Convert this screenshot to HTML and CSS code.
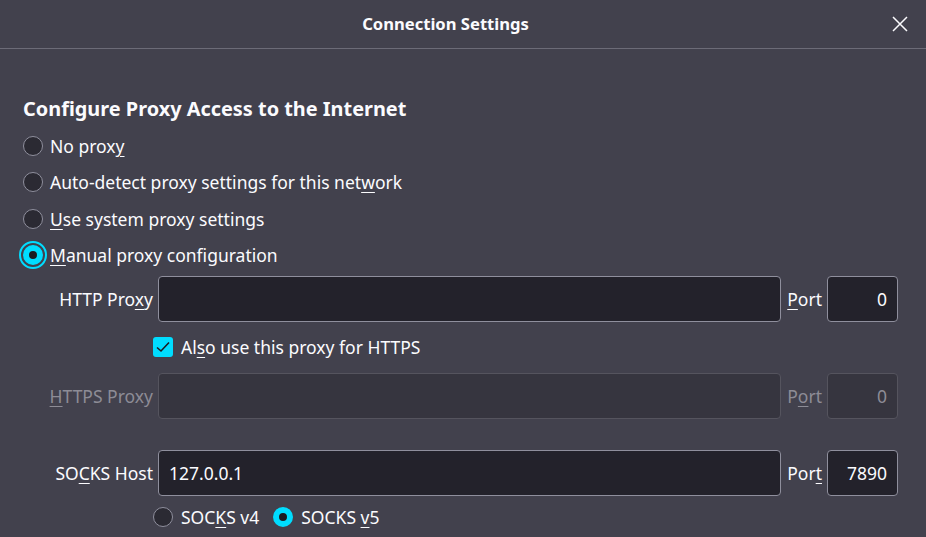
FILE: index.html
```html
<!DOCTYPE html>
<html>
<head>
<meta charset="utf-8">
<link rel="stylesheet" href="styles.css">
</head>
<body>
<div class="dialog">
  <header class="titlebar">
    <span class="title">Connection Settings</span>
    <svg class="close" width="16" height="16" viewBox="0 0 16 16"><path d="M1 1 L15 15 M15 1 L1 15" stroke="#fbfbfe" stroke-width="1.5" fill="none"/></svg>
  </header>
  <main class="content">
    <h1 class="heading">Configure Proxy Access to the Internet</h1>
    <div class="radio-list">
      <label class="radio-row"><span class="radio"></span><span>No prox<u>y</u></span></label>
      <label class="radio-row"><span class="radio"></span><span>Auto-detect proxy settings for this net<u>w</u>ork</span></label>
      <label class="radio-row"><span class="radio"></span><span><u>U</u>se system proxy settings</span></label>
      <label class="radio-row"><span class="radio checked focused"></span><span><u>M</u>anual proxy configuration</span></label>
    </div>
    <div class="manual">
      <div class="field-row">
        <span class="field-label">HTTP Pro<u>x</u>y</span>
        <div class="input"></div>
        <span class="port-label"><u>P</u>ort</span>
        <div class="input port">0</div>
      </div>
      <div class="check-row">
        <span class="checkbox"><svg width="20" height="20" viewBox="0 0 20 20"><path d="M4 10.5 L8 14 L16 5.5" stroke="#1c1b22" stroke-width="1.6" fill="none"/></svg></span>
        <span>Al<u>s</u>o use this proxy for HTTPS</span>
      </div>
      <div class="field-row disabled">
        <span class="field-label"><u>H</u>TTPS Proxy</span>
        <div class="input"></div>
        <span class="port-label">P<u>o</u>rt</span>
        <div class="input port">0</div>
      </div>
      <div class="field-row socks">
        <span class="field-label">SO<u>C</u>KS Host</span>
        <div class="input text">127.0.0.1</div>
        <span class="port-label">Por<u>t</u></span>
        <div class="input port">7890</div>
      </div>
      <div class="socks-row">
        <label class="radio-row small"><span class="radio"></span><span>SOC<u>K</u>S v4</span></label>
        <label class="radio-row small"><span class="radio checked"></span><span>SOCKS <u>v</u>5</span></label>
      </div>
    </div>
  </main>
</div>
</body>
</html>
```

FILE: styles.css
```css
html, body {
  margin: 0;
  padding: 0;
  background: #42414d;
  color: #fbfbfe;
  font-family: "Noto Sans", "Open Sans", sans-serif;
  font-size: 17.5px;
}
.dialog {
  width: 926px;
  height: 537px;
  overflow: hidden;
}
.titlebar {
  position: relative;
  height: 48px;
  border-bottom: 1px solid #6c6b77;
  display: flex;
  align-items: center;
  justify-content: center;
}
.title {
  font-weight: 700;
  font-size: 16.6px;
  margin-top: -2px;
  margin-right: 35px;
}
.close {
  position: absolute;
  right: 18px;
  top: 16px;
}
.content {
  padding: 0 28px 0 23px;
}
.heading {
  margin: 0;
  padding-top: 47px;
  font-size: 19.9px;
  font-weight: 700;
  line-height: 26px;
}
u {
  text-decoration-thickness: 1px;
  text-underline-offset: 3px;
}
.radio-list {
  display: flex;
  flex-direction: column;
  margin-top: 6px;
}
.radio-row {
  display: flex;
  align-items: center;
  gap: 7px;
  height: 36.3px;
  line-height: 22px;
}
.radio {
  box-sizing: border-box;
  width: 20px;
  height: 20px;
  border-radius: 50%;
  border: 1px solid #8f8f9d;
  background: #2b2a33;
  flex: none;
  position: relative;
}
.radio.checked {
  border: 6px solid #00ddff;
  background: #1c1b22;
}
.radio.focused {
  outline: 2px solid #00ddff;
  outline-offset: 2px;
}
.manual {
  display: flex;
  flex-direction: column;
  margin-top: 3px;
}
.field-row {
  display: flex;
  align-items: center;
  height: 46px;
}
.field-label {
  width: 130px;
  text-align: right;
  margin-right: 5px;
  white-space: nowrap;
  flex: none;
}
.input {
  box-sizing: border-box;
  height: 46px;
  flex: 1;
  background: #23222b;
  border: 1px solid #8f8f9d;
  border-radius: 4px;
  display: flex;
  align-items: center;
}
.input.text {
  padding-left: 10px;
}
.input.port {
  flex: none;
  width: 71px;
  justify-content: flex-end;
  padding-right: 10px;
}
.port-label {
  margin: 0 5px 0 6px;
}
.disabled {
  color: #8d8c96;
}
.disabled .input {
  background: #36353f;
  border-color: #55545e;
}
.check-row {
  display: flex;
  align-items: center;
  gap: 8px;
  padding-left: 130px;
  height: 20px;
  margin: 15px 0 16px;
}
.checkbox {
  width: 20px;
  height: 20px;
  border-radius: 3px;
  background: #00ddff;
  flex: none;
  display: flex;
}
.socks {
  margin-top: 31px;
}
.socks-row {
  display: flex;
  gap: 14px;
  padding-left: 130px;
  margin-top: 3px;
}
.socks-row .radio-row {
  height: 36px;
  gap: 8px;
}
```
